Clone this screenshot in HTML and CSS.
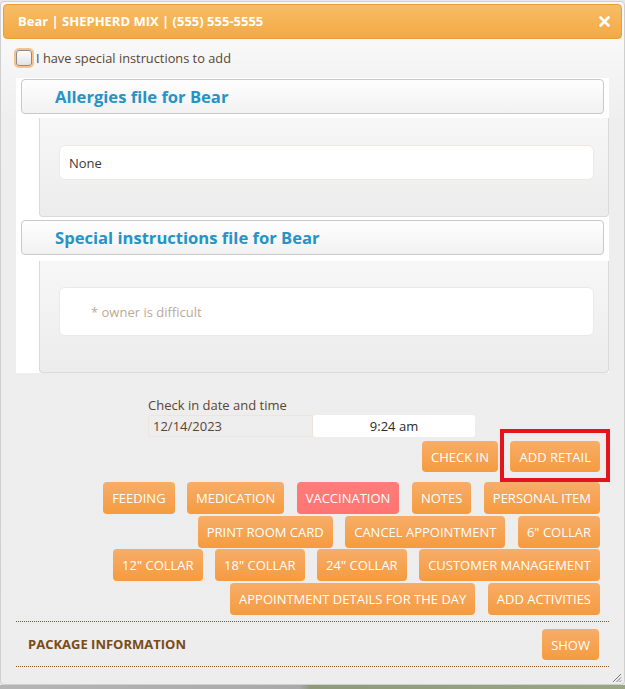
FILE: index.html
```
<!DOCTYPE html>
<html>
<head>
<meta charset="utf-8">
<link rel="stylesheet" href="styles.css">
</head>
<body>
<div class="dialog">
  <div class="titlebar">
    <span class="title">Bear | SHEPHERD MIX | (555) 555-5555</span>
    <svg class="close" width="11" height="11" viewBox="0 0 11 11"><path d="M1.5 1.5 L9.5 9.5 M9.5 1.5 L1.5 9.5" stroke="#fff" stroke-width="2.6" stroke-linecap="round"/></svg>
  </div>
  <div class="content">
    <label class="check-row"><input type="checkbox" class="cb"><span>I have special instructions to add</span></label>

    <div class="panel">
      <div class="acc-head">Allergies file for Bear</div>
      <div class="acc-body acc-body-1">
        <div class="field">None</div>
      </div>
      <div class="acc-head acc-head-2">Special instructions file for Bear</div>
      <div class="acc-body acc-body-2">
        <div class="field field-tall">* owner is difficult</div>
      </div>
    </div>

    <div class="checkin">
      <div class="checkin-label">Check in date and time</div>
      <div class="checkin-inputs">
        <div class="date">12/14/2023</div>
        <div class="time">9:24 am</div>
      </div>
    </div>

    <div class="btn-row first-row">
      <span class="btn">CHECK IN</span>
      <span class="btn highlighted">ADD RETAIL</span>
    </div>

    <div class="btn-rows">
      <div class="btn-row">
        <span class="btn">FEEDING</span>
        <span class="btn">MEDICATION</span>
        <span class="btn btn-red">VACCINATION</span>
        <span class="btn">NOTES</span>
        <span class="btn">PERSONAL ITEM</span>
      </div>
      <div class="btn-row">
        <span class="btn">PRINT ROOM CARD</span>
        <span class="btn">CANCEL APPOINTMENT</span>
        <span class="btn">6" COLLAR</span>
      </div>
      <div class="btn-row">
        <span class="btn">12" COLLAR</span>
        <span class="btn">18" COLLAR</span>
        <span class="btn">24" COLLAR</span>
        <span class="btn">CUSTOMER MANAGEMENT</span>
      </div>
      <div class="btn-row">
        <span class="btn">APPOINTMENT DETAILS FOR THE DAY</span>
        <span class="btn">ADD ACTIVITIES</span>
      </div>
    </div>

    <div class="package">
      <span class="package-title">PACKAGE INFORMATION</span>
      <span class="btn btn-show">SHOW</span>
    </div>
  </div>
  <svg class="grip" width="10" height="10" viewBox="0 0 10 10"><path d="M9 1 L1 9 M9 4.5 L4.5 9 M9 7.5 L7.5 9" stroke="#777" stroke-width="1"/></svg>
</div>
<div class="bottom-bg"></div>
</body>
</html>
```
FILE: styles.css
```
html, body {
  margin: 0;
  padding: 0;
}
body {
  width: 625px;
  height: 689px;
  overflow: hidden;
  background: #e9e9e9;
  font-family: "Open Sans", "Noto Sans", sans-serif;
}
.dialog {
  position: relative;
  margin-top: 1px;
  width: 619px;
  height: 678px;
  padding: 2px;
  border: 1px solid #cfcfcf;
  border-radius: 4px;
  background: linear-gradient(#f8f8f8 40px, #eeeeee 120px, #ededed);
}
.titlebar {
  height: 33px;
  border: 1px solid #e99f36;
  border-radius: 4px;
  background: linear-gradient(#f7bd67, #f4a942);
  display: flex;
  align-items: center;
  justify-content: space-between;
  padding: 0 11px 0 14px;
}
.title {
  color: #fff;
  font-weight: 700;
  font-size: 13px;
  margin-top: -1px;
}
.close {
  display: block;
}
.content {
  padding: 9px 13px 0 13px;
}
.check-row {
  display: flex;
  align-items: center;
  height: 20px;
  font-size: 12.8px;
  color: #5a4533;
}
.cb {
  appearance: none;
  -webkit-appearance: none;
  margin: 0 4px 0 0;
  width: 16px;
  height: 16px;
  border: 1px solid #8a8a8a;
  border-radius: 3px;
  background: linear-gradient(#fdfdfd, #e3e3e3);
  box-shadow: 0 0 0 2px #f6c38f;
}
.panel {
  margin-top: 10px;
  background: #fff;
  display: flex;
  flex-direction: column;
}
.acc-head {
  margin: 1px 5px 0;
  height: 33px;
  border: 1px solid #c9c9c9;
  border-radius: 4px;
  background: linear-gradient(#fefefe, #f7f7f7 60%, #f1f1f1);
  color: #2593c6;
  font-weight: 700;
  font-size: 16.6px;
  display: flex;
  align-items: center;
  padding-left: 33px;
}
.acc-head-2 {
  margin-top: 3px;
}
.acc-body {
  margin-left: 23px;
  border: 1px solid #dadada;
  border-top: none;
  border-radius: 0 0 4px 4px;
  background: linear-gradient(#f7f7f7, #ececec);
  padding: 0 14px 0 19px;
}
.acc-body-1 {
  margin-top: 4px;
  height: 71px;
  padding-top: 27px;
}
.acc-body-2 {
  margin-top: 6px;
  height: 85px;
  padding-top: 26px;
}
.field {
  height: 33px;
  border: 1px solid #f2e7dd;
  border-radius: 6px;
  background: #fff;
  font-size: 13px;
  color: #3a3a3a;
  display: flex;
  align-items: center;
  padding-left: 9px;
}
.field-tall {
  height: 47px;
  padding-left: 31px;
  color: #bda895;
}
.checkin {
  margin-top: 23px;
  padding-left: 132px;
}
.checkin-label {
  font-size: 13px;
  color: #5a4533;
  line-height: 19px;
}
.checkin-inputs {
  display: flex;
}
.date {
  width: 159px;
  height: 20px;
  border: 1px solid #efe4d9;
  border-radius: 3px;
  padding-left: 4px;
  font-size: 13px;
  line-height: 20px;
  color: #5a4533;
}
.time {
  width: 162px;
  height: 22px;
  border-radius: 3px;
  background: #fff;
  text-align: center;
  font-size: 13px;
  line-height: 22px;
  color: #2a2a2a;
}
.btn-row {
  display: flex;
  justify-content: flex-end;
  gap: 12.5px;
  padding-right: 9px;
}
.first-row {
  margin-top: 4px;
}
.first-row .btn {
  height: 31px;
}
.btn-rows {
  margin-top: 10px;
  display: flex;
  flex-direction: column;
  gap: 1.7px;
}
.btn {
  height: 32px;
  padding: 0 9px;
  border-radius: 4px;
  background: linear-gradient(#f7ad69, #f59b3f);
  color: #fff;
  font-size: 13px;
  display: flex;
  align-items: center;
  white-space: nowrap;
}
.btn-red {
  background: linear-gradient(#ff7d7a, #ff7472);
}
.highlighted {
  position: relative;
}
.highlighted::after {
  content: "";
  position: absolute;
  top: -12px;
  bottom: -10px;
  left: -10px;
  right: -10px;
  border: 4px solid #e4141d;
}
.package {
  margin-top: 6px;
  border-top: 1px dotted #8d5d22;
  border-bottom: 1px dotted #8d5d22;
  padding: 7px 10px 6px 12px;
  display: flex;
  justify-content: space-between;
  align-items: center;
}
.package-title {
  font-size: 13px;
  font-weight: 700;
  color: #7a4b14;
  margin-top: -1px;
}
.btn-show {
  height: 31px;
}
.grip {
  position: absolute;
  right: 2px;
  bottom: 1px;
}
.bottom-bg {
  height: 6px;
  background: linear-gradient(90deg, #b5b5b5 0, #a9a9a9 300px, #8f9a78 310px, #9aa682 600px);
}
```
